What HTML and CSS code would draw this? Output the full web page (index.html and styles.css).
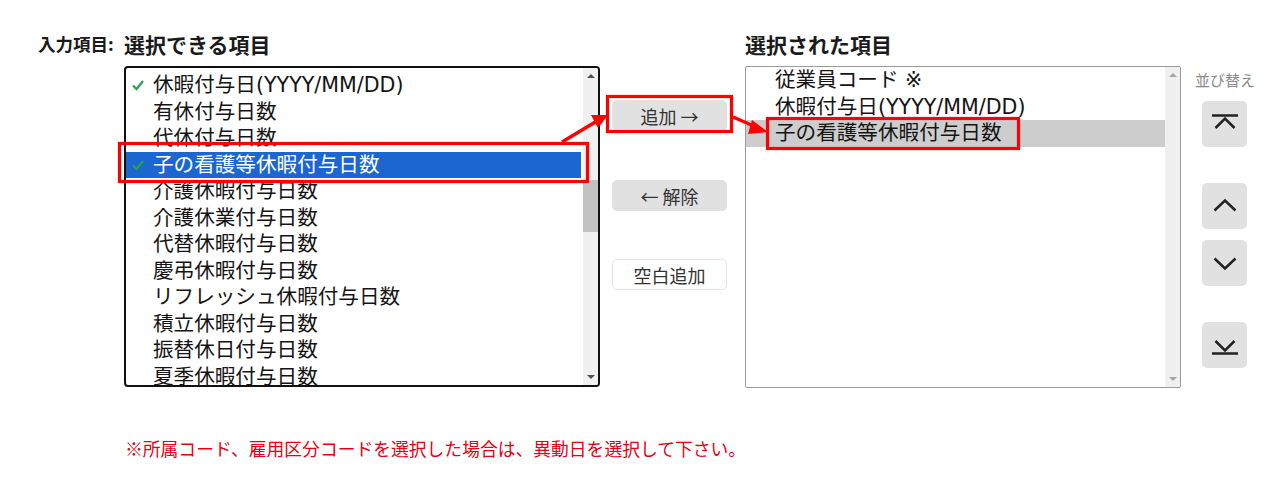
FILE: index.html
```html
<!DOCTYPE html>
<html lang="ja">
<head>
<meta charset="utf-8">
<title>項目選択</title>
<link rel="stylesheet" href="styles.css">
</head>
<body>
<div class="page">
  <div class="main">
    <div class="label">入力項目:</div>

    <div class="col col-left">
      <h2 class="heading">選択できる項目</h2>
      <div class="listbox listbox-left">
        <ul class="items">
          <li class="item"><span class="mark"><svg viewBox="0 0 14 14" width="14" height="14"><path d="M2 7.5 L5.5 11 L12 3" fill="none" stroke="#2f9e4f" stroke-width="2.3"/></svg></span>休暇付与日(YYYY/MM/DD)</li>
          <li class="item"><span class="mark"></span>有休付与日数</li>
          <li class="item"><span class="mark"></span>代休付与日数</li>
          <li class="item item-active"><span class="mark"><svg viewBox="0 0 14 14" width="14" height="14"><path d="M2 7.5 L5.5 11 L12 3" fill="none" stroke="#2f9e4f" stroke-width="2.3"/></svg></span>子の看護等休暇付与日数</li>
          <li class="item"><span class="mark"></span>介護休暇付与日数</li>
          <li class="item"><span class="mark"></span>介護休業付与日数</li>
          <li class="item"><span class="mark"></span>代替休暇付与日数</li>
          <li class="item"><span class="mark"></span>慶弔休暇付与日数</li>
          <li class="item"><span class="mark"></span>リフレッシュ休暇付与日数</li>
          <li class="item"><span class="mark"></span>積立休暇付与日数</li>
          <li class="item"><span class="mark"></span>振替休日付与日数</li>
          <li class="item"><span class="mark"></span>夏季休暇付与日数</li>
        </ul>
        <div class="scrollbar">
          <span class="sb-arrow sb-up"></span>
          <div class="sb-track"><div class="sb-thumb"></div></div>
          <span class="sb-arrow sb-down"></span>
        </div>
      </div>
    </div>

    <div class="col col-mid">
      <button class="btn btn-grey btn-add">追加 →</button>
      <button class="btn btn-grey btn-remove">← 解除</button>
      <button class="btn btn-white btn-blank">空白追加</button>
    </div>

    <div class="col col-right">
      <h2 class="heading">選択された項目</h2>
      <div class="listbox listbox-right">
        <ul class="items items-right">
          <li class="item">従業員コード ※</li>
          <li class="item">休暇付与日(YYYY/MM/DD)</li>
          <li class="item item-grey">子の看護等休暇付与日数</li>
        </ul>
        <div class="scrollbar scrollbar-light">
          <span class="sb-arrow sb-up"></span>
          <div class="sb-track"></div>
          <span class="sb-arrow sb-down"></span>
        </div>
      </div>
    </div>

    <div class="col col-sort">
      <div class="sort-label">並び替え</div>
      <button class="sort-btn sort-top" aria-label="先頭へ">
        <svg viewBox="0 0 28 28" width="28" height="28"><path d="M1 5.5 H27" stroke="#222" stroke-width="2.5" fill="none"/><path d="M4.5 18 L14 8.5 L23.5 18" stroke="#222" stroke-width="2.5" fill="none"/></svg>
      </button>
      <button class="sort-btn sort-up" aria-label="上へ">
        <svg viewBox="0 0 28 28" width="28" height="28"><path d="M3.5 18.5 L14 8.5 L24.5 18.5" stroke="#222" stroke-width="2.5" fill="none"/></svg>
      </button>
      <button class="sort-btn sort-down" aria-label="下へ">
        <svg viewBox="0 0 28 28" width="28" height="28"><path d="M3.5 9.5 L14 19.5 L24.5 9.5" stroke="#222" stroke-width="2.5" fill="none"/></svg>
      </button>
      <button class="sort-btn sort-bottom" aria-label="末尾へ">
        <svg viewBox="0 0 28 28" width="28" height="28"><path d="M4.5 10 L14 19.5 L23.5 10" stroke="#222" stroke-width="2.5" fill="none"/><path d="M1 22.5 H27" stroke="#222" stroke-width="2.5" fill="none"/></svg>
      </button>
    </div>
  </div>

  <p class="note">※所属コード、雇用区分コードを選択した場合は、異動日を選択して下さい。</p>
</div>

<svg class="annotations" viewBox="0 0 1280 488" width="1280" height="488">
  <rect x="119.5" y="143.5" width="468" height="38" fill="none" stroke="#f00" stroke-width="3.2"/>
  <rect x="607.5" y="96.5" width="124" height="35" fill="none" stroke="#f00" stroke-width="3.2"/>
  <rect x="767.5" y="118.5" width="251" height="30" fill="none" stroke="#f00" stroke-width="3.2"/>
  <line x1="562" y1="142" x2="597" y2="121" stroke="#f00" stroke-width="3.5"/>
  <polygon points="608,115 591,115 598,128" fill="#f00"/>
  <line x1="733" y1="117" x2="756" y2="127" stroke="#f00" stroke-width="3.5"/>
  <polygon points="768,132 752,120 748,134" fill="#f00"/>
</svg>
</body>
</html>
```

FILE: styles.css
```css
* { box-sizing: border-box; }

html, body {
  margin: 0;
  padding: 0;
  background: #fff;
}

body {
  width: 1280px;
  height: 488px;
  overflow: hidden;
  position: relative;
  font-family: "Noto Sans CJK JP", "Noto Sans", sans-serif;
  color: #111;
}

.page {
  padding: 30px 0 0 38px;
}

.main {
  display: flex;
  align-items: flex-start;
}

.label {
  width: 86px;
  font-size: 17.5px;
  font-weight: bold;
  line-height: 28px;
  color: #1a1a1a;
  white-space: nowrap;
}

.heading {
  margin: 0 0 8px 0;
  font-size: 21px;
  font-weight: bold;
  line-height: 28px;
  color: #1a1a1a;
  white-space: nowrap;
}

.col-left { width: 476px; }
.col-mid {
  width: 145px;
  padding: 70px 0 0 12px;
  display: flex;
  flex-direction: column;
}
.col-right { width: 437px; }
.col-sort {
  display: flex;
  flex-direction: column;
}

/* list boxes */
.listbox {
  display: flex;
  background: #fff;
  overflow: hidden;
}

.listbox-left {
  width: 476px;
  height: 321px;
  border: 2px solid #111;
  border-radius: 4px;
}

.listbox-right {
  width: 436px;
  height: 322px;
  border: 1px solid #9a9a9a;
  border-radius: 2px;
}

.items {
  list-style: none;
  margin: 0;
  padding: 4px 2px 0 0;
  flex: 1;
  overflow: hidden;
}

.items-right {
  padding: 0;
}

.item {
  display: flex;
  align-items: center;
  height: 26.5px;
  font-family: "DejaVu Sans", "Noto Sans CJK JP", sans-serif;
  font-size: 20.6px;
  line-height: 26.5px;
  white-space: nowrap;
  color: #141414;
}

.items-right .item { padding-left: 29px; }

.mark {
  width: 27px;
  flex: none;
  display: flex;
  align-items: center;
  padding-left: 5px;
}

.mark svg { display: block; }

.item-active {
  background: #1b66d1;
  color: #fff;
}

.item-grey {
  background: #cdcdcd;
}

/* scrollbars */
.scrollbar {
  width: 15px;
  flex: none;
  background: #f0f0f0;
  display: flex;
  flex-direction: column;
  align-items: center;
}

.sb-arrow {
  width: 0;
  height: 0;
  border-left: 4px solid transparent;
  border-right: 4px solid transparent;
  margin: 6px 0;
}
.sb-up { border-bottom: 4px solid #505050; }
.sb-down { border-top: 4px solid #505050; }

.scrollbar-light .sb-up { border-bottom-color: #a6a6a6; }
.scrollbar-light .sb-down { border-top-color: #a6a6a6; }

.sb-track {
  flex: 1;
  width: 100%;
  padding-top: 96px;
}

.sb-thumb {
  width: 100%;
  height: 52px;
  background: #c2c2c2;
}

/* middle buttons */
.btn {
  width: 115px;
  height: 31px;
  font-family: inherit;
  font-size: 18px;
  line-height: 1;
  color: #333;
  border-radius: 5px;
  padding: 0;
  cursor: pointer;
}

.btn-grey {
  background: #e1e1e1;
  border: 1px solid #e1e1e1;
}

.btn-white {
  background: #fff;
  border: 1px solid #e3e3e3;
}

.btn-remove { margin-top: 49px; }
.btn-blank { margin-top: 48px; }

/* sort column */
.sort-label {
  margin: 40px 0 0 13px;
  font-size: 15px;
  line-height: 20px;
  color: #8a8a8a;
  white-space: nowrap;
}

.sort-btn {
  width: 45px;
  height: 46px;
  margin-left: 20px;
  background: #e1e1e1;
  border: none;
  border-radius: 5px;
  padding: 0;
  display: flex;
  align-items: center;
  justify-content: center;
  cursor: pointer;
}

.sort-top { margin-top: 11px; }
.sort-up { margin-top: 36px; }
.sort-down { margin-top: 11px; }
.sort-bottom { margin-top: 36px; }

/* note */
.note {
  margin: 48px 0 0 87px;
  font-size: 17.8px;
  line-height: 24px;
  color: #e60012;
  white-space: nowrap;
}

/* annotation overlay */
.annotations {
  position: absolute;
  left: 0;
  top: 0;
  pointer-events: none;
}
```
